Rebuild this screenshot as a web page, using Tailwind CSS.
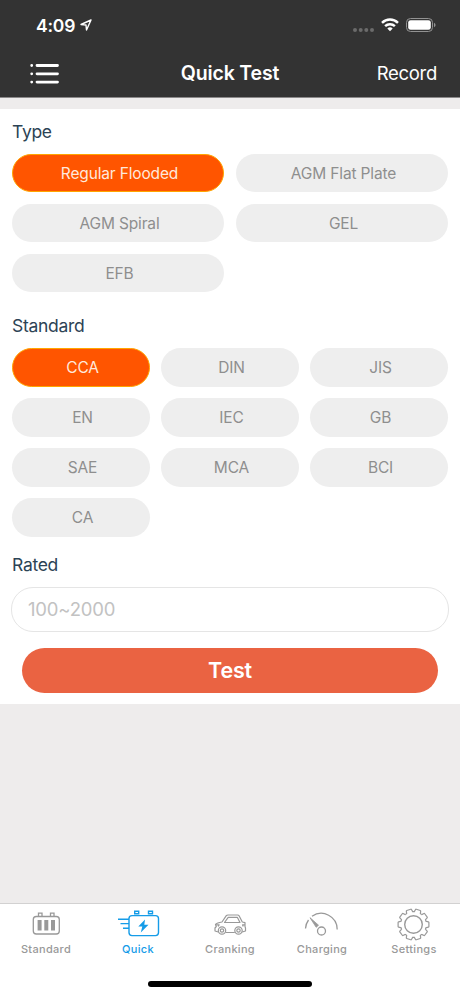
<!DOCTYPE html>
<html lang="en">
<head>
<meta charset="utf-8">
<meta name="viewport" content="width=device-width, initial-scale=1">
<title>Quick Test</title>
<script src="https://cdn.jsdelivr.net/npm/@tailwindcss/browser@4"></script>
</head>
<body class="bg-[#eeecec]">
<div class="relative flex h-[996px] w-[460px] flex-col overflow-hidden bg-[#eeecec] font-['Inter',sans-serif]">
  <header class="h-[98px] shrink-0 border-b border-[#8b898a] bg-[#333333] text-white">
    <div class="flex h-[50px] items-center pl-9 pr-[24px]">
      <span class="mt-px text-[17.500px] font-semibold leading-none tracking-[-0.2px]">4:09</span>
      <svg class="ml-[5px] size-[12px]" viewBox="0 0 12 12" fill="none" stroke="#fff" stroke-width="1.4" stroke-linejoin="round"><path d="M11 1 1 5.500 6 6 6.500 11Z"/></svg>
      <svg class="ml-auto mt-[9px] h-1 w-[21px]" viewBox="0 0 21 4" fill="#6b6b6b"><circle cx="2" cy="2" r="2"/><circle cx="7.700" cy="2" r="2"/><circle cx="13.300" cy="2" r="2"/><circle cx="19" cy="2" r="2"/></svg>
      <svg class="ml-[7px] h-[14px] w-[18px]" viewBox="0 0 18 14" fill="none" stroke="#fff" stroke-width="2.500"><path d="M1 4.800a11.600 11.600 0 0 1 16 0"/><path d="M4.100 8.100a7.200 7.200 0 0 1 9.800 0"/><path d="M9 13.300 6.300 10.600a4 4 0 0 1 5.400 0Z" fill="#fff" stroke="none"/></svg>
      <svg class="ml-[7px] h-[14px] w-[30px]" viewBox="0 0 30 14"><rect x=".5" y=".5" width="26" height="13" rx="4" fill="none" stroke="#929292"/><rect x="2.200" y="2.200" width="22.600" height="9.600" rx="2.400" fill="#fff"/><path d="M28 4.800q1.600.8 1.600 2.200T28 9.200Z" fill="#929292"/></svg>
    </div>
    <div class="grid h-[47px] grid-cols-[1fr_auto_1fr] items-center pl-[30px] pr-[23px]">
      <svg class="h-[22px] w-[30px]" viewBox="0 0 30 22" stroke="#fff" stroke-width="2.800" stroke-linecap="round"><path d="M7 2.500H27.500M7 10.800H27.500M7 19.100H27.500M1.700 2.500h.01M1.700 10.800h.01M1.700 19.100h.01"/></svg>
      <h1 class="ml-[-7px] text-[19.500px] font-semibold leading-none tracking-[-0.15px]">Quick Test</h1>
      <span class="text-right text-[18.500px] leading-none tracking-[-0.300px]">Record</span>
    </div>
  </header>

  <main class="mt-[11px] h-[595px] shrink-0 bg-white px-3 pt-3">
    <h2 class="text-[17.500px] leading-[22px] tracking-[-0.300px] text-[#2c4355]">Type</h2>
    <div class="mt-[10.500px] grid grid-cols-2 gap-x-3 gap-y-[11.500px] text-[15.500px] tracking-[-0.150px] text-[#8e8e8e] *:flex *:h-[38.500px] *:items-center *:justify-center *:rounded-full *:bg-[#eeeeee] *:pl-[3px] *:pt-px *:leading-none">
      <button class="border border-[#ffa500] !bg-[#ff5500] text-[#ffe9dc]">Regular Flooded</button>
      <button>AGM Flat Plate</button>
      <button>AGM Spiral</button>
      <button>GEL</button>
      <button>EFB</button>
    </div>
    <h2 class="mt-[23px] text-[17.500px] leading-[22px] tracking-[-0.300px] text-[#2c4355]">Standard</h2>
    <div class="mt-[11px] grid grid-cols-3 gap-x-[11px] gap-y-[11.500px] text-[15.500px] tracking-[-0.150px] text-[#8e8e8e] *:flex *:h-[38.500px] *:items-center *:justify-center *:rounded-full *:bg-[#eeeeee] *:pl-[3px] *:leading-none">
      <button class="border border-[#ffa500] !bg-[#ff5500] text-[#ffe9dc]">CCA</button>
      <button>DIN</button>
      <button>JIS</button>
      <button>EN</button>
      <button>IEC</button>
      <button>GB</button>
      <button>SAE</button>
      <button>MCA</button>
      <button>BCI</button>
      <button>CA</button>
    </div>
    <h2 class="mt-[17.500px] text-[17.500px] leading-[22px] tracking-[-0.300px] text-[#2c4355]">Rated</h2>
    <input class="-mx-px mt-[11px] block h-[45px] w-[438px] rounded-[22px] border border-[#e5e5e5] px-[16px] pb-[2px] text-[18.500px] tracking-[-0.200px] placeholder:text-[#c2c2c2]" placeholder="100~2000" aria-label="Rated">
    <button class="ml-[10px] mt-4 block h-[45px] w-[416px] rounded-full bg-[#ea6342] text-[21.500px] font-semibold leading-none tracking-[-0.200px] text-white">Test</button>
  </main>

  <nav class="mt-auto grid h-[93px] shrink-0 grid-cols-5 border-t border-[#d2d1d1] bg-white text-[11px] font-medium tracking-[0.300px] text-[#999999] *:flex *:flex-col *:items-center *:pt-1 *:leading-none">
    <a><svg class="h-[34px] w-[44px]" viewBox="0 0 44 34" fill="none" stroke="currentColor" stroke-width="1.300"><rect x="9.300" y="8.500" width="26" height="17.500" rx="3"/><path d="M14.500 8V5.200h3.500V8M26.500 8V5.200H30V8"/><path d="M15.600 12v10.500M22.300 12v10.500M29 12v10.500" stroke-width="4"/></svg><span class="mt-[2px]">Standard</span></a>
    <a class="text-[#159ce8]"><svg class="h-[34px] w-[44px]" viewBox="0 0 44 34" fill="none" stroke="currentColor" stroke-width="1.400"><rect x="13" y="7.600" width="29.500" height="20" rx="3"/><path d="M18.700 3.200h4v2.500h-4zM32.500 3.200h4v2.500h-4zM2 11.300h11M4.500 15.600H13M7 20.200h6"/><path d="M29 11.500 22.300 18.500h4L24.800 24.500 32.500 16.700h-4.200Z" fill="currentColor" stroke="none"/></svg><span class="mt-[2px]">Quick</span></a>
    <a><svg class="h-[34px] w-[44px]" viewBox="0 0 44 34" fill="none" stroke="currentColor" stroke-width="1.200" stroke-linejoin="round"><path d="M10.300 24 7 23V20L8.300 18.500 7.500 16.500Q9 14.700 14 14L18.300 7.700Q18.800 7 20 7H29.500Q30.700 7 31.200 8L34.300 14 37 14.700V18.500L37.500 20V23L34.200 24M17.700 24.500H26.800"/><path d="M16.500 14.500 20.200 9.300H29.300L32 14.500ZM7.800 16.800H11.200L10.200 18.500M37 16.800H34.500L35.200 18.500"/><circle cx="14" cy="22.500" r="3.700"/><circle cx="14" cy="22.500" r="1.700"/><circle cx="30.500" cy="22.500" r="3.700"/><circle cx="30.500" cy="22.500" r="1.700"/></svg><span class="mt-[2px]">Cranking</span></a>
    <a><svg class="h-[34px] w-[44px]" viewBox="0 0 44 34" fill="none" stroke="currentColor" stroke-width="1.300"><path d="M5.500 20.500A16 16 0 0 1 8.500 12M12 8.300A16 16 0 0 1 37.200 21.500"/><circle cx="21.500" cy="23" r="4"/><path d="M10 9.700 18.500 17.200 16.200 19.300Z" fill="currentColor" stroke-width=".8"/></svg><span class="mt-[2px]">Charging</span></a>
    <a><svg class="h-[34px] w-[44px]" viewBox="0.5 0 44 34">
      <defs><path id="tooth" d="M19.300 4.700 19.900 1.700H24.100L24.700 4.700V8H19.300Z"/>
      <g id="gear"><circle cx="22" cy="16.500" r="12.200"/><use href="#tooth" transform="rotate(18 22 16.500)"/><use href="#tooth" transform="rotate(54 22 16.500)"/><use href="#tooth" transform="rotate(90 22 16.500)"/><use href="#tooth" transform="rotate(126 22 16.500)"/><use href="#tooth" transform="rotate(162 22 16.500)"/><use href="#tooth" transform="rotate(198 22 16.500)"/><use href="#tooth" transform="rotate(234 22 16.500)"/><use href="#tooth" transform="rotate(270 22 16.500)"/><use href="#tooth" transform="rotate(306 22 16.500)"/><use href="#tooth" transform="rotate(342 22 16.500)"/></g></defs>
      <use href="#gear" fill="#999" stroke="#999" stroke-width="2.400" stroke-linejoin="round"/><use href="#gear" fill="#fff"/><circle cx="22" cy="16.500" r="8.800" fill="none" stroke="#999" stroke-width="1.400"/></svg><span class="mt-[2px]">Settings</span></a>
  </nav>
  <div class="absolute bottom-[9px] left-[148px] h-[6px] w-[164px] rounded-full bg-black"></div>
</div>
</body>
</html>
